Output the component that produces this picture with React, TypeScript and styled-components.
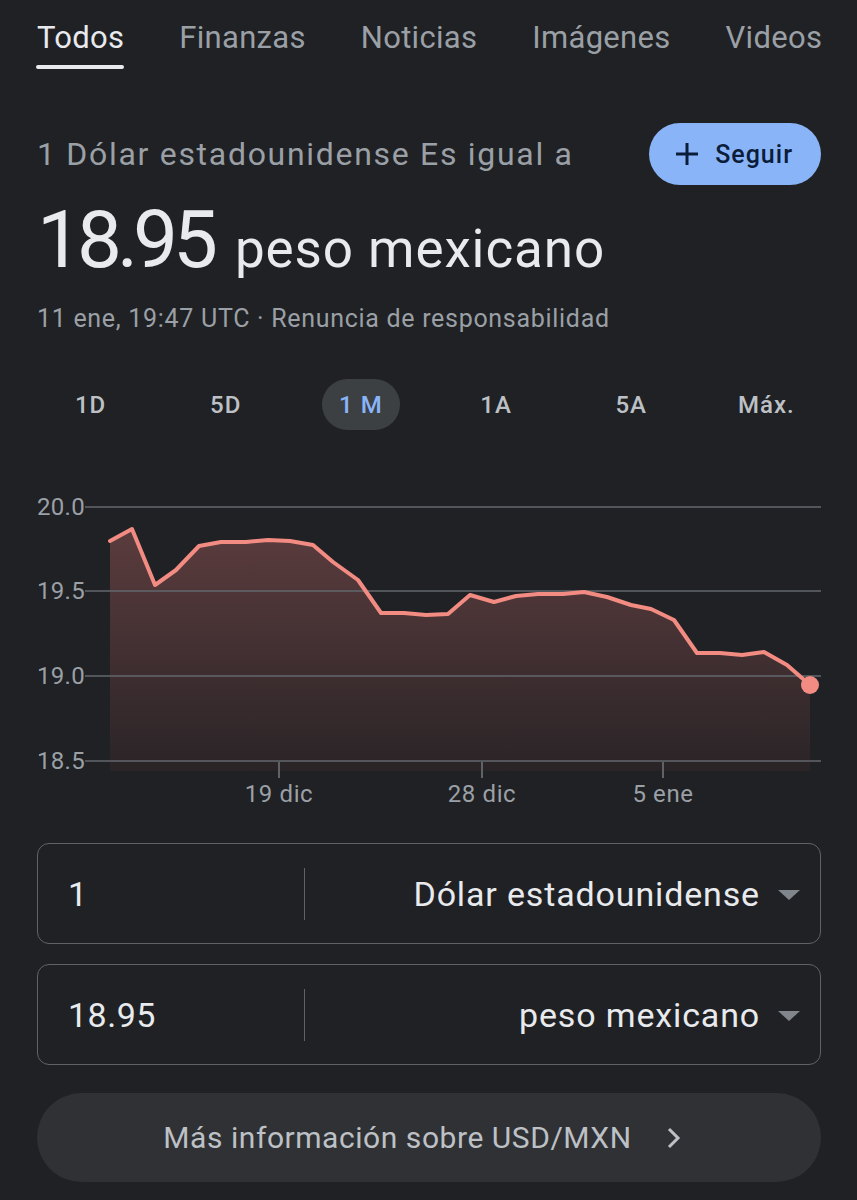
import React from "react";
import styled, { createGlobalStyle } from "styled-components";

const GlobalStyle = createGlobalStyle`
  html, body {
    margin: 0;
    padding: 0;
    background: #202124;
  }
  body {
    font-family: Roboto, "Noto Sans", "Liberation Sans", sans-serif;
    color: #e8eaed;
    -webkit-font-smoothing: antialiased;
  }
`;

const Page = styled.div`
  width: 857px;
  height: 1200px;
  overflow: hidden;
  background: #202124;
  box-sizing: border-box;
  padding: 0 36px 0 37px;
`;

const TabBar = styled.nav`
  display: flex;
  gap: 55px;
  height: 70px;
  white-space: nowrap;
  overflow: visible;
  margin-right: -36px;
`;

const Tab = styled.div<{ $active?: boolean }>`
  position: relative;
  font-size: 31px;
  line-height: 31px;
  padding-top: 22px;
  color: ${(p) => (p.$active ? "#e8eaed" : "#9aa0a6")};
  letter-spacing: 0.3px;
  &::after {
    content: "";
    display: ${(p) => (p.$active ? "block" : "none")};
    position: absolute;
    left: -1px;
    right: 0;
    top: 65px;
    height: 4px;
    border-radius: 2px;
    background: #e8eaed;
  }
`;

const HeaderRow = styled.div`
  display: flex;
  justify-content: space-between;
  align-items: center;
  margin-top: 53px;
  height: 62px;
`;

const Subtitle = styled.div`
  font-size: 32px;
  color: #9aa0a6;
  letter-spacing: 1.7px;
`;

const FollowButton = styled.button`
  display: flex;
  align-items: center;
  gap: 16px;
  height: 62px;
  padding: 0 28px 0 26px;
  border: none;
  border-radius: 31px;
  background: #8ab4f8;
  color: #0b1d3a;
  font-family: Roboto, "Noto Sans", sans-serif;
  font-size: 25px;
  font-weight: 500;
  letter-spacing: 1px;
`;

const ValueLine = styled.div`
  display: flex;
  align-items: baseline;
  gap: 22px;
  margin-top: 10px;
  height: 90px;
`;

const BigNumber = styled.span`
  font-size: 80px;
  line-height: 90px;
  letter-spacing: -5px;
  color: #e8eaed;
`;

const BigUnit = styled.span`
  font-size: 53px;
  color: #e8eaed;
  letter-spacing: 0.9px;
`;

const DateLine = styled.div`
  margin-top: 19px;
  font-size: 25px;
  color: #9aa0a6;
  letter-spacing: 0.7px;
`;

const RangeRow = styled.div`
  display: grid;
  grid-template-columns: repeat(6, 1fr);
  margin: 46px -13px 0 -14px;
  height: 51px;
`;

const RangeCell = styled.div`
  display: flex;
  justify-content: center;
  align-items: center;
`;

const RangeButton = styled.div<{ $active?: boolean }>`
  height: 51px;
  padding: 0 ${(p) => (p.$active ? "17px" : "0")};
  border-radius: 26px;
  display: flex;
  align-items: center;
  background: ${(p) => (p.$active ? "#3c4043" : "transparent")};
  color: ${(p) => (p.$active ? "#8ab4f8" : "#bdc1c6")};
  font-size: 24px;
  font-weight: 500;
  letter-spacing: 1px;
`;

const ChartWrap = styled.div`
  margin-top: 59px;
  height: 330px;
  svg {
    display: block;
  }
`;

const ConverterBox = styled.div<{ $gap?: number }>`
  display: flex;
  align-items: center;
  height: 101px;
  box-sizing: border-box;
  border: 1.5px solid #5f6368;
  border-radius: 12px;
  margin-top: ${(p) => p.$gap ?? 0}px;
`;

const AmountField = styled.div`
  width: 266px;
  padding-left: 30px;
  font-size: 34px;
  color: #e8eaed;
  box-sizing: border-box;
  letter-spacing: 0.5px;
`;

const Divider = styled.div`
  width: 1px;
  height: 52px;
  background: #5f6368;
`;

const CurrencySelect = styled.div`
  flex: 1;
  display: flex;
  justify-content: flex-end;
  align-items: center;
  gap: 18px;
  padding-right: 20px;
  font-size: 34px;
  color: #e8eaed;
  letter-spacing: 0.85px;
`;

const Caret = styled.span`
  width: 0;
  height: 0;
  border-left: 11px solid transparent;
  border-right: 11px solid transparent;
  border-top: 10px solid #80868b;
  margin-top: 2px;
`;

const MoreButton = styled.div`
  margin-top: 28px;
  height: 89px;
  box-sizing: border-box;
  padding-right: 14px;
  border-radius: 45px;
  background: #303134;
  display: flex;
  justify-content: center;
  align-items: center;
  gap: 35px;
  font-size: 30px;
  color: #bdc1c6;
  letter-spacing: 0.55px;
`;

const points: [number, number][] = [
  [110, 542], [132, 530], [155, 586], [176, 571], [199, 547], [221, 543],
  [246, 543], [268, 541], [290, 542], [313, 546], [333, 563], [358, 581],
  [381, 614], [404, 614], [426, 616], [448, 615], [470, 596], [494, 603],
  [516, 597], [538, 595], [563, 595], [584, 593], [607, 598], [631, 606],
  [651, 610], [674, 621], [697, 654], [720, 654], [742, 656], [764, 653],
  [787, 666], [810, 686],
];

const Chart: React.FC = () => {
  const line = points.map((p, i) => `${i ? "L" : "M"}${p[0]} ${p[1]}`).join(" ");
  const area = `${line} L810 772 L110 772 Z`;
  const grid = [
    { y: 508, label: "20.0" },
    { y: 592, label: "19.5" },
    { y: 677, label: "19.0" },
    { y: 762, label: "18.5" },
  ];
  const ticks = [
    { x: 279, label: "19 dic" },
    { x: 482, label: "28 dic" },
    { x: 663, label: "5 ene" },
  ];
  return (
    <svg width="784" height="330" viewBox="37 490 784 330">
      <defs>
        <linearGradient id="fill" x1="0" y1="0" x2="0" y2="1">
          <stop offset="0" stopColor="#5b3c3d" />
          <stop offset="1" stopColor="#2a2427" />
        </linearGradient>
      </defs>
      <path d={area} fill="url(#fill)" />
      {grid.map((g) => (
        <g key={g.label}>
          <line x1="85" x2="821" y1={g.y} y2={g.y} stroke="#5f6368" strokeWidth="2" opacity="0.8" />
          <text
            x="37"
            y={g.y + 8}
            fontSize="24"
            fill="#9aa0a6"
            fontFamily="Roboto, sans-serif"
            letterSpacing="0.3"
          >
            {g.label}
          </text>
        </g>
      ))}
      {ticks.map((t) => (
        <g key={t.label}>
          <line x1={t.x} x2={t.x} y1="763" y2="779" stroke="#5f6368" strokeWidth="2" />
          <text
            x={t.x}
            y="803"
            fontSize="24"
            fill="#9aa0a6"
            textAnchor="middle"
            fontFamily="Roboto, sans-serif"
            letterSpacing="0.6"
          >
            {t.label}
          </text>
        </g>
      ))}
      <path d={line} fill="none" stroke="#f28b82" strokeWidth="4" strokeLinejoin="round" strokeLinecap="round" />
      <circle cx="810" cy="686" r="9" fill="#f28b82" />
    </svg>
  );
};

const PlusIcon = () => (
  <svg width="24" height="24" viewBox="0 0 24 24">
    <path d="M12 1v22M1 12h22" stroke="#0b1d3a" strokeWidth="3" fill="none" />
  </svg>
);

const ChevronIcon = () => (
  <svg width="14" height="22" viewBox="0 0 14 22">
    <path d="M2 2l9 9-9 9" stroke="#bdc1c6" strokeWidth="3" fill="none" />
  </svg>
);

const ranges = ["1D", "5D", "1 M", "1A", "5A", "Máx."];

export default function App() {
  return (
    <>
      <GlobalStyle />
      <Page>
        <TabBar>
          <Tab $active>Todos</Tab>
          <Tab>Finanzas</Tab>
          <Tab>Noticias</Tab>
          <Tab>Imágenes</Tab>
          <Tab>Videos</Tab>
        </TabBar>
        <HeaderRow>
          <Subtitle>1 Dólar estadounidense Es igual a</Subtitle>
          <FollowButton>
            <PlusIcon />
            Seguir
          </FollowButton>
        </HeaderRow>
        <ValueLine>
          <BigNumber>18.95</BigNumber>
          <BigUnit>peso mexicano</BigUnit>
        </ValueLine>
        <DateLine>11 ene, 19:47 UTC · Renuncia de responsabilidad</DateLine>
        <RangeRow>
          {ranges.map((r) => (
            <RangeCell key={r}>
              <RangeButton $active={r === "1 M"}>{r}</RangeButton>
            </RangeCell>
          ))}
        </RangeRow>
        <ChartWrap>
          <Chart />
        </ChartWrap>
        <ConverterBox $gap={24}>
          <AmountField>1</AmountField>
          <Divider />
          <CurrencySelect>
            Dólar estadounidense
            <Caret />
          </CurrencySelect>
        </ConverterBox>
        <ConverterBox $gap={20}>
          <AmountField>18.95</AmountField>
          <Divider />
          <CurrencySelect>
            peso mexicano
            <Caret />
          </CurrencySelect>
        </ConverterBox>
        <MoreButton>
          Más información sobre USD/MXN
          <ChevronIcon />
        </MoreButton>
      </Page>
    </>
  );
}
